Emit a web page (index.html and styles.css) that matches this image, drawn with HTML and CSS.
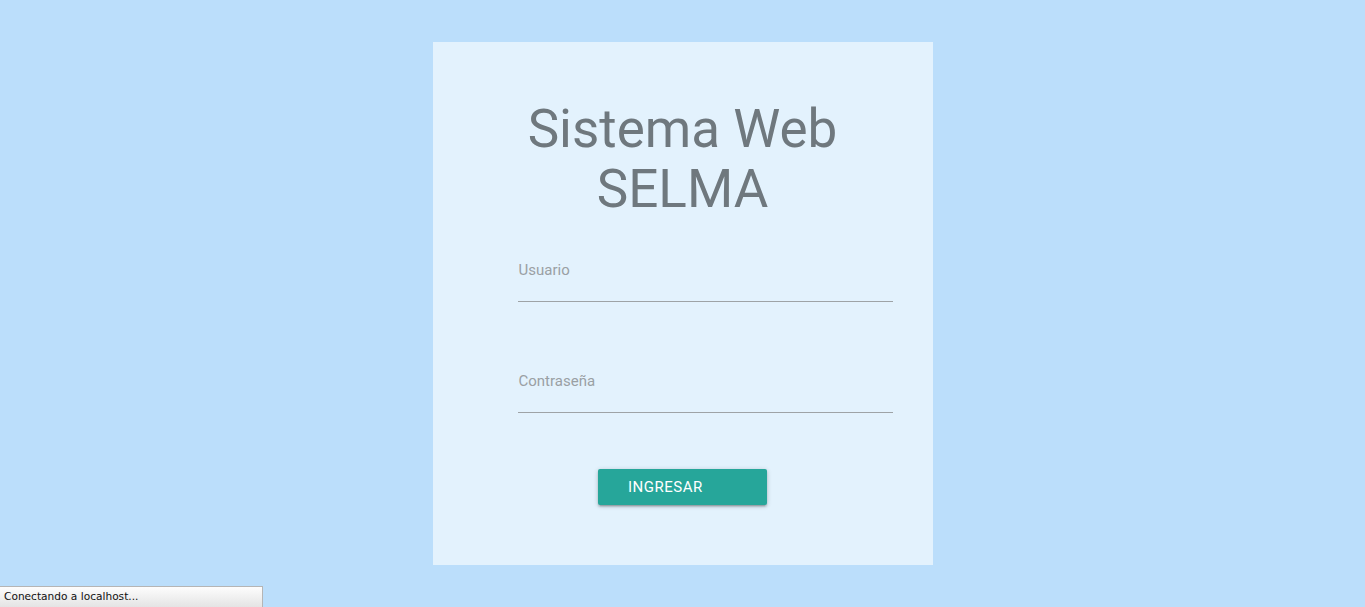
FILE: index.html
```html
<!DOCTYPE html>
<html lang="es">
<head>
<meta charset="utf-8">
<title>Sistema Web SELMA</title>
<link rel="stylesheet" href="styles.css">
</head>
<body>
<main class="page">
  <section class="card">
    <h1 class="title">Sistema Web<br>SELMA</h1>
    <form class="form">
      <div class="field">
        <label class="label">Usuario</label>
      </div>
      <div class="field field-second">
        <label class="label">Contraseña</label>
      </div>
      <div class="actions">
        <button type="button" class="btn">INGRESAR</button>
      </div>
    </form>
  </section>
</main>
<div class="status">Conectando a localhost...</div>
</body>
</html>
```
FILE: styles.css
```css
html, body {
  margin: 0;
  padding: 0;
}
body {
  background: #bbdefb;
  font-family: Roboto, "Liberation Sans", sans-serif;
  height: 607px;
  overflow: hidden;
}
.page {
  display: flex;
  justify-content: center;
  padding-top: 42px;
}
.card {
  width: 500px;
  height: 523px;
  box-sizing: border-box;
  background: #e3f2fd;
  padding-top: 57px;
}
.title {
  margin: 0;
  font-weight: 400;
  font-size: 53px;
  line-height: 60px;
  color: #6f787e;
  text-align: center;
}
.form {
  margin-top: 41px;
}
.field {
  width: 375px;
  margin-left: 85px;
  height: 41px;
  border-bottom: 1px solid #9ea3a6;
}
.field-second {
  margin-top: 69px;
}
.label {
  display: block;
  font-size: 15px;
  line-height: 20px;
  color: #9aa0a4;
  padding-left: 1px;
}
.actions {
  display: flex;
  justify-content: center;
  margin-top: 56px;
}
.btn {
  width: 169px;
  height: 36px;
  border: none;
  border-radius: 2px;
  background: #26a69a;
  color: #fff;
  font-family: Roboto, "Liberation Sans", sans-serif;
  font-size: 15px;
  letter-spacing: 0.5px;
  text-align: left;
  padding: 0 30px;
  box-shadow: 0 2px 2px 0 rgba(0,0,0,.14), 0 3px 1px -2px rgba(0,0,0,.12), 0 1px 5px 0 rgba(0,0,0,.2);
}
.status {
  position: fixed;
  left: 0;
  bottom: 0;
  width: 263px;
  height: 21px;
  box-sizing: border-box;
  padding: 3px 0 0 4px;
  background: linear-gradient(#fdfdfd, #e4e4e4);
  border-top: 1px solid #b5b5b5;
  border-right: 1px solid #b5b5b5;
  font-family: "DejaVu Sans", "Liberation Sans", sans-serif;
  font-size: 10.6px;
  color: #111;
}
```
